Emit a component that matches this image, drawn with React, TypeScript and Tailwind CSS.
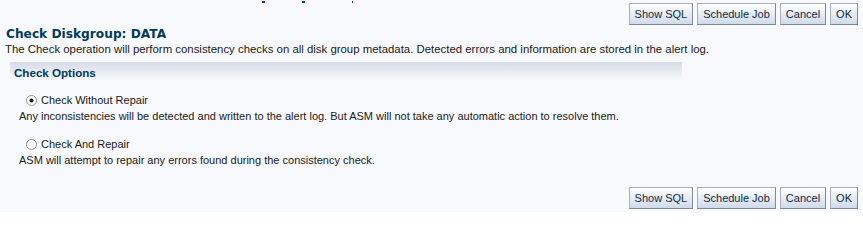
const buttons = ["Show SQL", "Schedule Job", "Cancel", "OK"];

function ButtonBar() {
  return (
    <div className="flex justify-end gap-[4px] pr-[5px]">
      {buttons.map((b) => (
        <button
          key={b}
          className="h-[22px] px-[5px] border border-[#a7b0bc] border-b-[#7f8996] border-r-[#7f8996] bg-gradient-to-b from-[#ffffff] to-[#cfdbea] text-[11px] leading-none text-[#102a45]"
        >
          {b}
        </button>
      ))}
    </div>
  );
}

function Radio({ checked }: { checked?: boolean }) {
  return (
    <svg width="11" height="11" viewBox="0 0 11 11" className="shrink-0">
      <circle cx="5.5" cy="5.5" r="5" fill="#fff" stroke="#8a8f96" />
      <path d="M2 8.5 A4.5 4.5 0 0 0 9 8.5" fill="none" stroke="#dcdcdc" />
      {checked && <circle cx="5.5" cy="5.5" r="2" fill="#111" />}
    </svg>
  );
}

function Option({ label, desc, checked }: { label: string; desc: string; checked?: boolean }) {
  return (
    <div className="text-[11px]">
      <label className="flex items-center gap-[4px] pl-[26px] h-[14px]">
        <Radio checked={checked} />
        <span>{label}</span>
      </label>
      <p className="pl-[19px] mt-[2px]">{desc}</p>
    </div>
  );
}

export default function App() {
  return (
    <div className="w-[863px] h-[212px] overflow-hidden bg-[#f8f9fc] text-[12px] leading-[14px] text-[#1a1a1a] font-['Liberation_Sans',Arial,sans-serif]">
      <div className="flex h-[3px] items-end pl-[262px] gap-[37px]">
        <span className="w-[3px] h-[2px] bg-[#1f3f8a]" />
        <span className="w-[3px] h-[2px] bg-[#1f3f8a]" />
        <span className="w-[1px] h-[2px] bg-[#1f3f8a] ml-[10px]" />
      </div>
      <ButtonBar />
      <h1 className="mt-[2px] pl-[6px] text-[12.2px] leading-[15px] font-bold text-[#003a5d] font-['DejaVu_Sans',Verdana,sans-serif]">
        Check Diskgroup: DATA
      </h1>
      <p className="pl-[5px] text-[11.4px]">
        The Check operation will perform consistency checks on all disk group metadata. Detected errors and
        information are stored in the alert log.
      </p>
      <div className="ml-[10px] mt-[6px] w-[672px] h-[18px] bg-gradient-to-b from-[#d6dbe7] to-[#f8f9fc] pl-[4px] pt-[4px]">
        <h2 className="text-[11.6px] leading-[14px] font-bold text-[#003a5d]">Check Options</h2>
      </div>
      <div className="mt-[13px] flex flex-col gap-[14px]">
        <Option
          checked
          label="Check Without Repair"
          desc="Any inconsistencies will be detected and written to the alert log. But ASM will not take any automatic action to resolve them."
        />
        <Option
          label="Check And Repair"
          desc="ASM will attempt to repair any errors found during the consistency check."
        />
      </div>
      <div className="mt-[20px]">
        <ButtonBar />
      </div>
    </div>
  );
}
